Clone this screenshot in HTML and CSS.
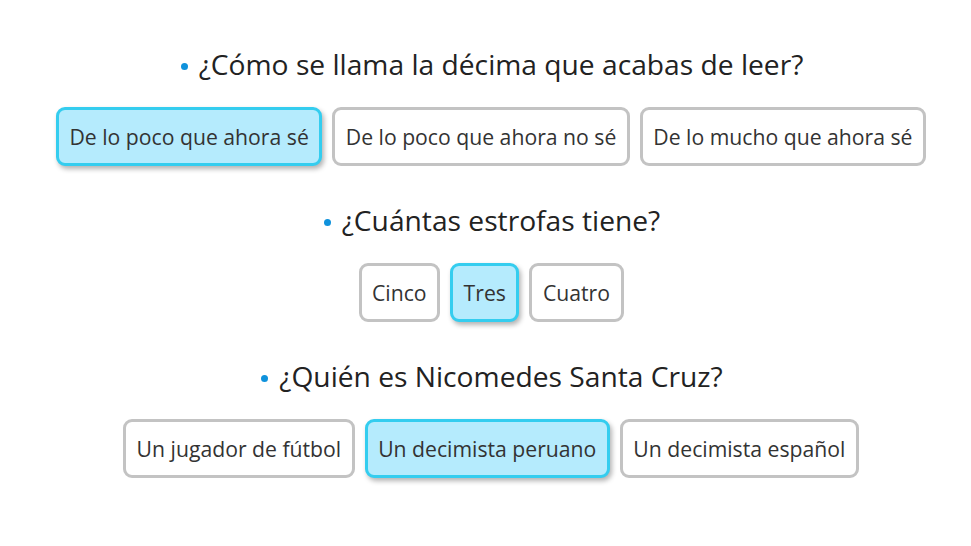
FILE: index.html
```html
<!DOCTYPE html>
<html lang="es">
<head>
<meta charset="utf-8">
<title>Preguntas</title>
<link rel="stylesheet" href="styles.css">
</head>
<body>
<main class="quiz">
  <section class="question">
    <h2 class="q-title"><span class="q-text">¿Cómo se llama la décima que acabas de leer?</span></h2>
    <div class="options">
      <button class="opt selected">De lo poco que ahora sé</button>
      <button class="opt">De lo poco que ahora no sé</button>
      <button class="opt">De lo mucho que ahora sé</button>
    </div>
  </section>
  <section class="question">
    <h2 class="q-title"><span class="q-text">¿Cuántas estrofas tiene?</span></h2>
    <div class="options">
      <button class="opt">Cinco</button>
      <button class="opt selected">Tres</button>
      <button class="opt">Cuatro</button>
    </div>
  </section>
  <section class="question">
    <h2 class="q-title"><span class="q-text">¿Quién es Nicomedes Santa Cruz?</span></h2>
    <div class="options">
      <button class="opt">Un jugador de fútbol</button>
      <button class="opt selected">Un decimista peruano</button>
      <button class="opt">Un decimista español</button>
    </div>
  </section>
</main>
</body>
</html>
```
FILE: styles.css
```css
html, body {
  margin: 0;
  padding: 0;
  background: #ffffff;
}
body {
  font-family: "Open Sans", "Noto Sans", sans-serif;
  color: #333333;
}
.quiz {
  display: flex;
  flex-direction: column;
  align-items: stretch;
  padding-top: 45px;
}
.question {
  display: flex;
  flex-direction: column;
  align-items: center;
  margin-bottom: 35px;
}
.q-title {
  margin: 0 0 24px 0;
  padding-left: 31px;
  font-weight: 400;
  font-size: 28.2px;
  line-height: 38px;
  color: #222222;
}
.q-text {
  position: relative;
  display: inline-block;
}
.q-text::before {
  content: "";
  position: absolute;
  left: -18px;
  top: 18px;
  width: 7px;
  height: 7px;
  border-radius: 50%;
  background: #0f92dc;
}
.options {
  display: flex;
  gap: 10px;
  padding-left: 11px;
}
.opt {
  font-family: inherit;
  font-size: 21.2px;
  line-height: 28px;
  color: #333333;
  background: #ffffff;
  border: 3px solid #c3c3c3;
  border-radius: 9px;
  padding: 12.5px 10.5px;
  margin: 0;
  cursor: pointer;
}
.opt.selected {
  background: #b5ebfd;
  border-color: #34cdef;
  box-shadow: 2px 3px 5px rgba(0, 0, 0, 0.3);
}
```
